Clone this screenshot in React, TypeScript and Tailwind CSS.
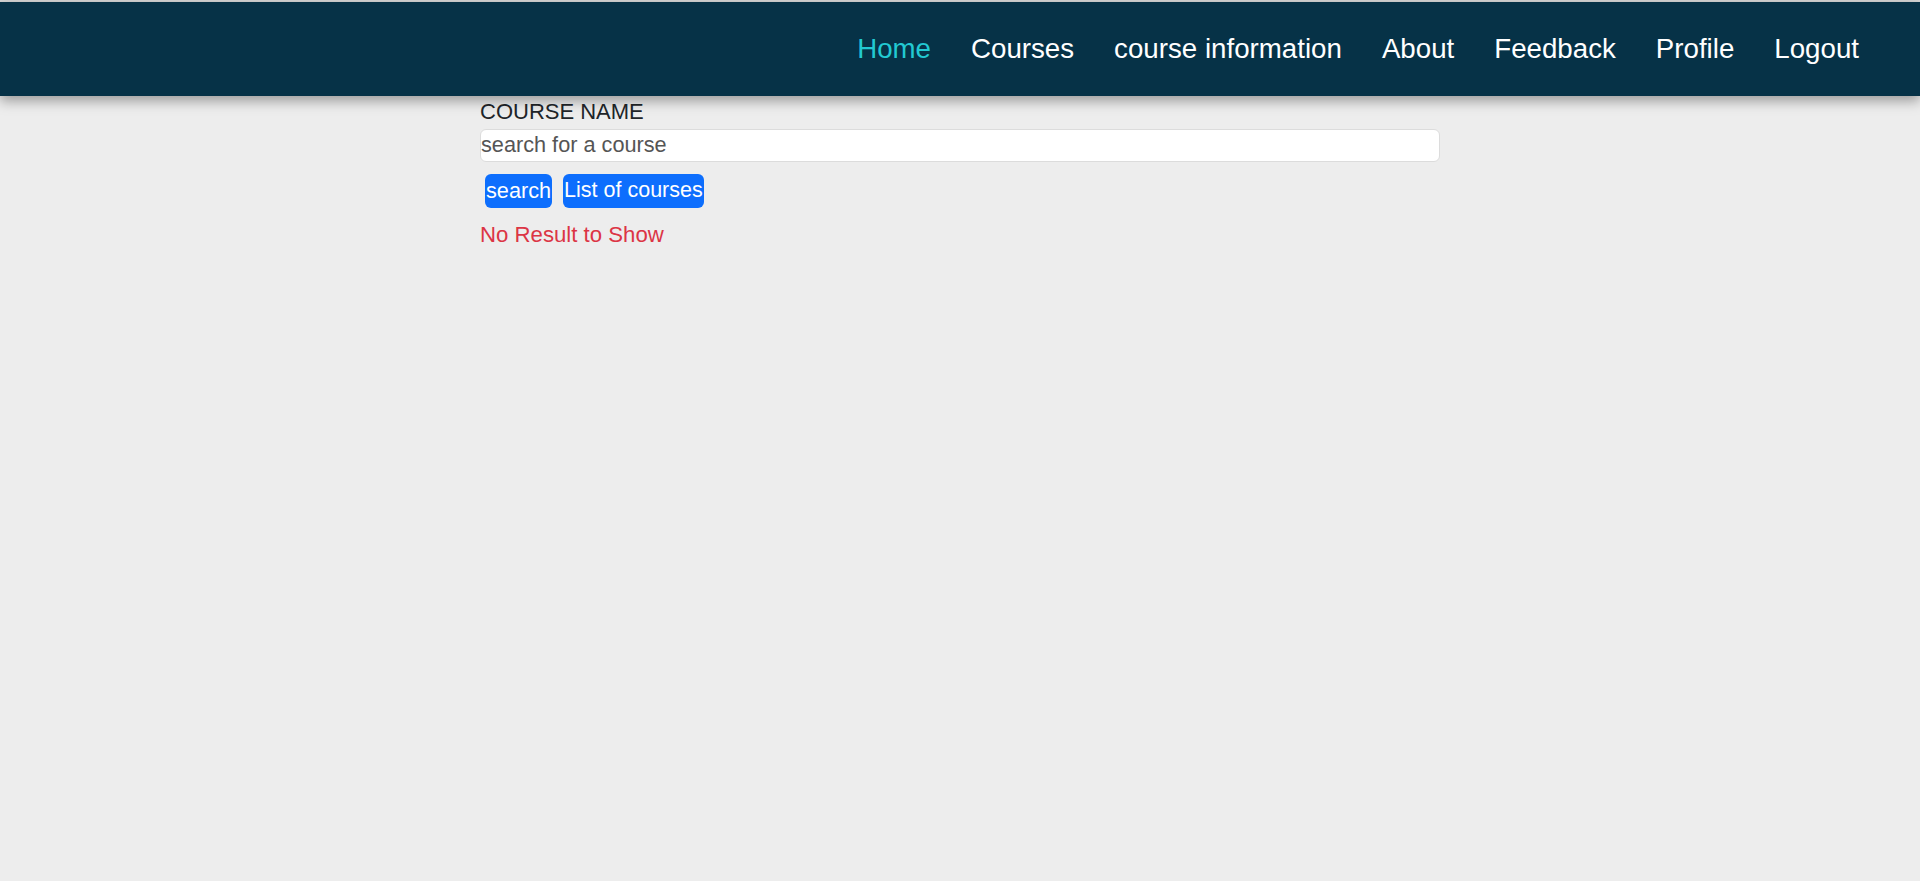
import React from "react";

const links = ["Home", "Courses", "course information", "About", "Feedback", "Profile", "Logout"];

export default function App() {
  return (
    <div
      className="min-h-[881px] w-full bg-[#ededed]"
      style={{ fontFamily: '"Liberation Sans", Arial, sans-serif' }}
    >
      <div className="h-[2px] bg-[#d6d6d6]" />
      <nav className="relative z-10 flex h-[94px] items-center justify-end bg-[#063247] pr-[61px] shadow-[0_5px_12px_rgba(0,0,0,0.35)]">
        <ul className="flex items-center gap-[40px]">
          {links.map((l, i) => (
            <li key={l}>
              <a
                href="#"
                className={
                  "text-[27.7px] leading-[31px] " +
                  (i === 0 ? "text-[#22c9d2]" : "text-white")
                }
              >
                {l}
              </a>
            </li>
          ))}
        </ul>
      </nav>
      <main className="mx-auto w-[960px]">
        <label className="block text-[22px] leading-[32px] text-[#212529]">COURSE NAME</label>
        <div className="mt-[1px] flex h-[33px] items-center rounded-[6px] border border-[#dcdcdc] bg-white">
          <input
            className="w-full bg-transparent px-0 text-[21.7px] text-[#555] outline-none placeholder:text-[#555]"
            placeholder="search for a course"
          />
        </div>
        <div className="mt-[12px] flex items-center gap-[11px] pl-[5px]">
          <button className="h-[34px] rounded-[6px] bg-[#0d6efd] px-[1px] text-[21.7px] leading-none text-white">
            search
          </button>
          <button className="h-[34px] rounded-[6px] bg-[#0d6efd] px-[1px] text-[21.5px] leading-none text-white">
            List of courses
          </button>
        </div>
        <p className="mt-[11px] text-[22.2px] leading-[32px] text-[#dc3545]">No Result to Show</p>
      </main>
    </div>
  );
}
